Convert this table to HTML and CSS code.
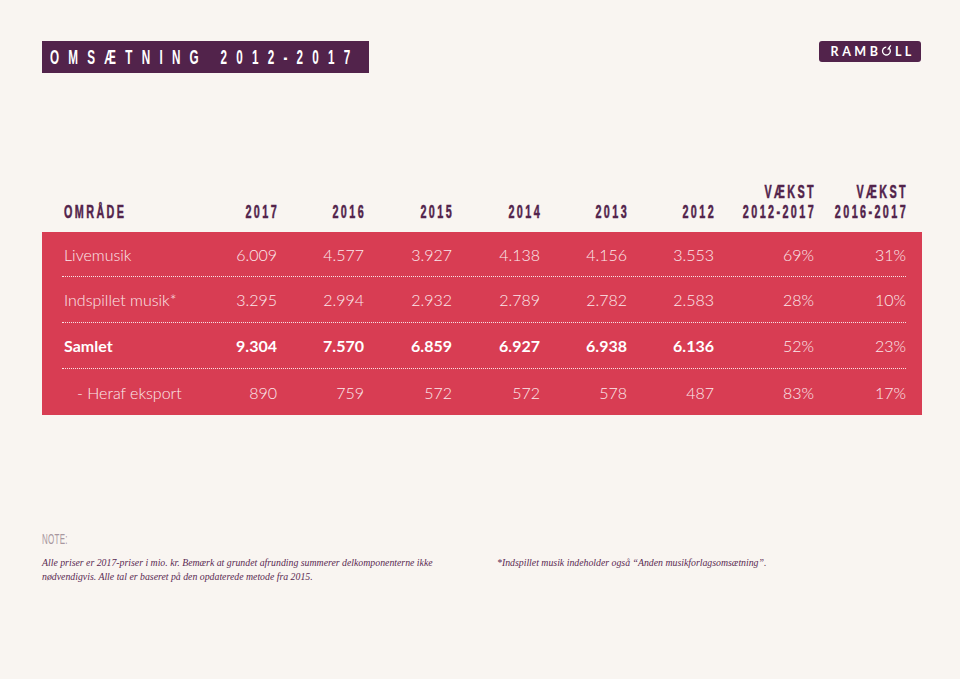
FILE: index.html
```html
<!DOCTYPE html>
<html lang="da">
<head>
<meta charset="utf-8">
<title>Omsætning 2012-2017</title>
<link rel="stylesheet" href="styles.css">
</head>
<body>
<div class="page">
  <header class="top">
    <h1 class="title"><span class="cond">OMSÆTNING 2012-2017</span></h1>
    <div class="logo">
      <span>RAMB</span><svg class="logo-o" viewBox="0 0 12 12" width="10" height="10"><path d="M9.4 2.4 A4.7 4.7 0 1 1 6.3 1.4" fill="none" stroke="#fff" stroke-width="1.6"/><path d="M8.0 4.4 L11.8 -0.8" stroke="#fff" stroke-width="1.5"/></svg><span>LL</span>
    </div>
  </header>

  <div class="thead grid">
    <div class="h left"><span class="cond">OMRÅDE</span></div>
    <div class="h"><span class="cond">2017</span></div>
    <div class="h"><span class="cond">2016</span></div>
    <div class="h"><span class="cond">2015</span></div>
    <div class="h"><span class="cond">2014</span></div>
    <div class="h"><span class="cond">2013</span></div>
    <div class="h"><span class="cond">2012</span></div>
    <div class="h"><span class="cond">VÆKST<br>2012-2017</span></div>
    <div class="h"><span class="cond">VÆKST<br>2016-2017</span></div>
  </div>

  <div class="tbody">
    <div class="row grid">
      <div class="c left">Livemusik</div>
      <div class="c">6.009</div><div class="c">4.577</div><div class="c">3.927</div><div class="c">4.138</div><div class="c">4.156</div><div class="c">3.553</div><div class="c">69%</div><div class="c">31%</div>
    </div>
    <div class="row grid">
      <div class="c left">Indspillet musik*</div>
      <div class="c">3.295</div><div class="c">2.994</div><div class="c">2.932</div><div class="c">2.789</div><div class="c">2.782</div><div class="c">2.583</div><div class="c">28%</div><div class="c">10%</div>
    </div>
    <div class="row grid">
      <div class="c left b">Samlet</div>
      <div class="c b">9.304</div><div class="c b">7.570</div><div class="c b">6.859</div><div class="c b">6.927</div><div class="c b">6.938</div><div class="c b">6.136</div><div class="c">52%</div><div class="c">23%</div>
    </div>
    <div class="row grid last">
      <div class="c left sub">- Heraf eksport</div>
      <div class="c">890</div><div class="c">759</div><div class="c">572</div><div class="c">572</div><div class="c">578</div><div class="c">487</div><div class="c">83%</div><div class="c">17%</div>
    </div>
  </div>

  <footer class="notes">
    <div class="note-label"><span class="cond">NOTE:</span></div>
    <div class="note-cols">
      <p>Alle priser er 2017-priser i mio. kr. Bemærk at grundet afrunding summerer delkomponenterne ikke nødvendigvis. Alle tal er baseret på den opdaterede metode fra 2015.</p>
      <p>*Indspillet musik indeholder også “Anden musikforlagsomsætning”.</p>
    </div>
  </footer>
</div>
</body>
</html>
```

FILE: styles.css
```css
html, body {
  margin: 0;
  padding: 0;
  background: #f9f5f1;
}
body {
  width: 960px;
  height: 679px;
  overflow: hidden;
}
.page {
  padding: 41px 38px 0 42px;
}
.top {
  display: flex;
  justify-content: space-between;
  align-items: flex-start;
}
.cond {
  display: inline-block;
  white-space: nowrap;
  transform: scaleX(0.6);
  transform-origin: left center;
}
.title {
  margin: 0;
  width: 327px;
  height: 32px;
  box-sizing: border-box;
  padding-left: 8px;
  background: #52234b;
  color: #fff;
  font-family: "Liberation Sans", Arial, sans-serif;
  font-weight: 700;
  font-size: 19.5px;
  line-height: 32px;
  letter-spacing: 15.4px;
  white-space: nowrap;
  overflow: visible;
}
.logo {
  width: 102px;
  height: 21px;
  margin-right: 1px;
  background: #52234b;
  border-radius: 3px;
  color: #fff;
  display: flex;
  align-items: center;
  justify-content: center;
  font-family: "Lato", "Liberation Sans", sans-serif;
  font-size: 12.5px;
  font-weight: 700;
  letter-spacing: 3.5px;
  padding-left: 2px;
  box-sizing: border-box;
}
.logo span:last-child { margin-right: -3.5px; }
.logo-o {
  margin-right: 3.5px;
  margin-top: -1px;
  overflow: visible;
}

.grid {
  display: grid;
  grid-template-columns: 1fr 87px 87px 88px 88px 87px 87px 100px 92px;
}
.thead {
  margin-top: 109px;
  padding: 0 16px 10px 22px;
  align-items: end;
}
.h {
  display: flex;
  justify-content: flex-end;
  color: #52234b;
  font-family: "Liberation Sans", Arial, sans-serif;
  font-weight: 700;
  font-size: 18px;
  line-height: 20px;
  -webkit-text-stroke: 0.5px #52234b;
}
.h .cond {
  text-align: right;
  letter-spacing: 4px;
  margin-right: -2.4px;
  transform-origin: right center;
}
.h.left { justify-content: flex-start; }
.h.left .cond { transform-origin: left center; margin-right: 0; }

.tbody {
  width: 880px;
  background: #d83d53;
  padding: 0 16px 0 22px;
  box-sizing: border-box;
}
.row {
  height: 46px;
  box-sizing: border-box;
  border-bottom: 1px dotted rgba(255, 255, 255, 0.85);
  align-items: center;
  margin-left: -2px;
  padding-left: 2px;
}
.row:first-child { height: 45px; }
.row.last { border-bottom: 0; }
.c {
  text-align: right;
  color: #fbe9ec;
  font-family: "Lato", "Open Sans", sans-serif;
  font-weight: 300;
  font-size: 16px;
  white-space: nowrap;
}
.c.left { text-align: left; }
.c.b { font-weight: 700; color: #fff; }
.c.sub { padding-left: 13px; }

.notes {
  margin-top: 116px;
  color: #52234b;
}
.note-label {
  font-family: "Liberation Sans", Arial, sans-serif;
  font-size: 14.5px;
  color: #a8979f;
  line-height: 16px;
}
.note-label .cond {
  transform: scaleX(0.55);
  letter-spacing: 0.5px;
}
.note-cols {
  display: grid;
  grid-template-columns: 455px 1fr;
  margin-top: 9px;
}
.note-cols p {
  margin: 0;
  font-family: "Liberation Serif", "DejaVu Serif", serif;
  font-style: italic;
  font-size: 9.8px;
  line-height: 14px;
  color: #5a2a52;
}
.note-cols p:first-child { max-width: 400px; }
```
